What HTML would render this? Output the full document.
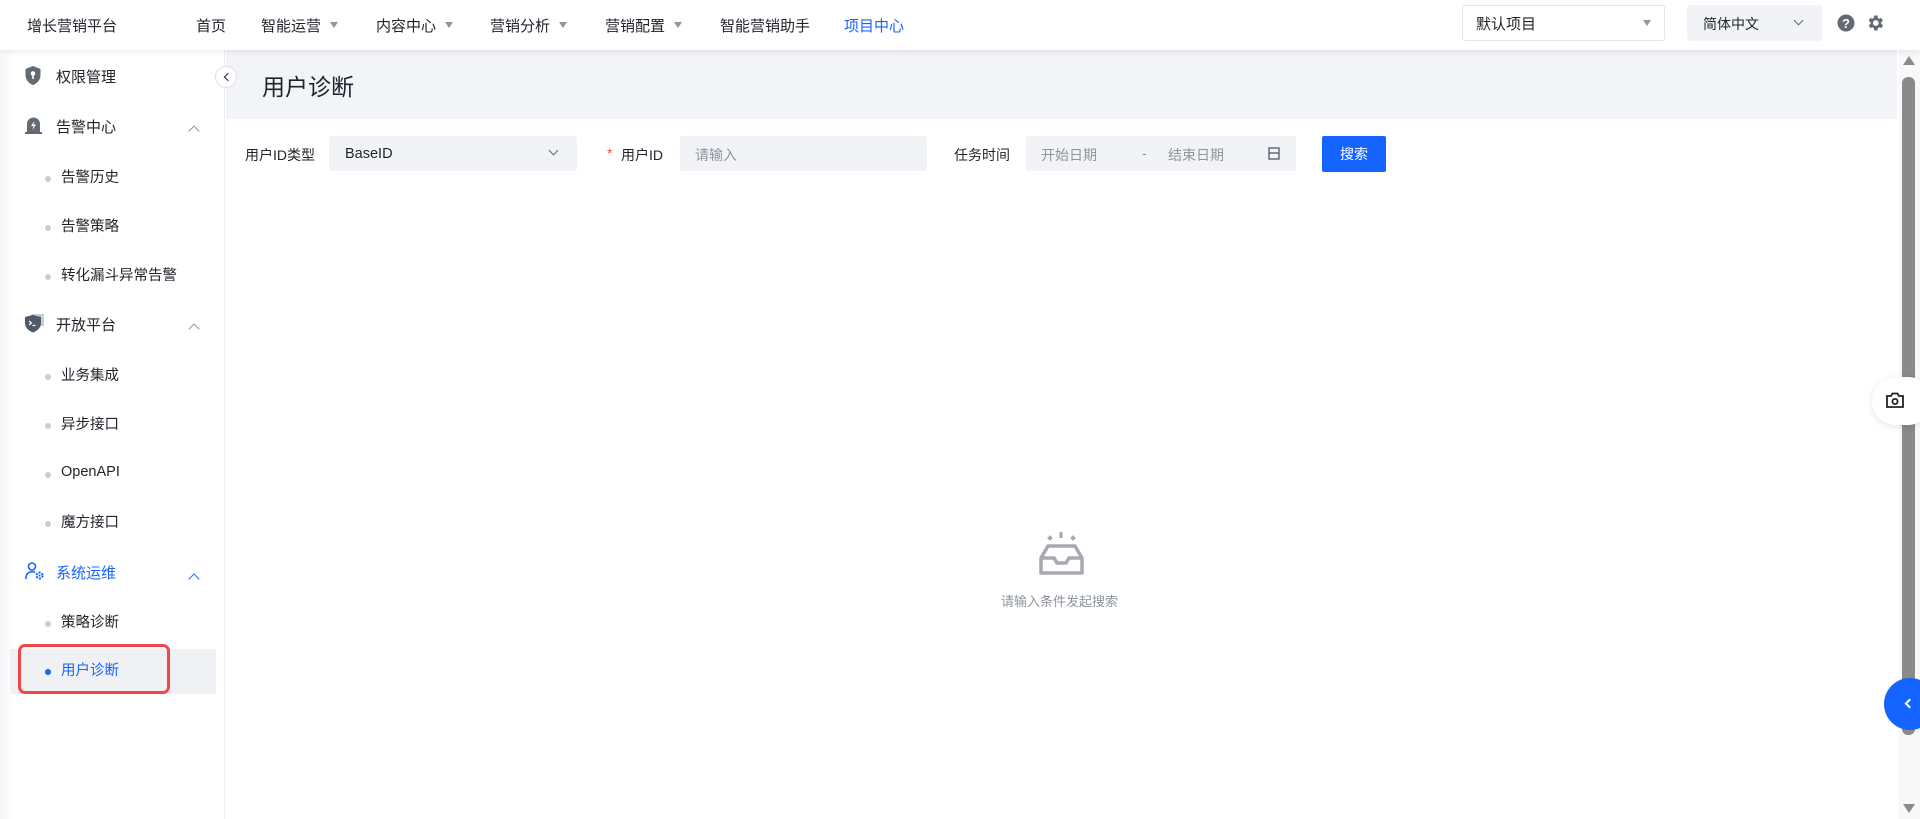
<!DOCTYPE html>
<html><head><meta charset="utf-8"><style>
*{margin:0;padding:0;box-sizing:border-box}
body{width:1920px;height:819px;overflow:hidden;background:#fff;font-family:"Liberation Sans","Noto Sans CJK SC",sans-serif;color:#1f2329;position:relative}
.abs{position:absolute;white-space:nowrap}
.hdr{position:absolute;left:0;top:0;width:1920px;height:50px;background:#fff;box-shadow:0 2px 6px rgba(0,0,0,.08);z-index:2}
.nav{font-size:15px;top:15px;color:#1f2329}
.tri{display:inline-block;margin-left:9px;width:0;height:0;border-left:4px solid transparent;border-right:4px solid transparent;border-top:6px solid #8f959e;vertical-align:3px}
.side{position:absolute;left:0;top:50px;width:225px;height:769px;background:linear-gradient(90deg,#f5f6f8 0,#fff 14px);border-right:1px solid #eceef1}
.mi{font-size:15px;color:#1f2329}
.ci{font-size:14.5px;color:#1f2329}
.dot{position:absolute;width:6px;height:6px;border-radius:50%;background:#c9cdd4}
.car{position:absolute;width:8px;height:8px;border-left:1.5px solid #8f959e;border-top:1.5px solid #8f959e;transform:rotate(45deg)}
.lbl{font-size:14px;color:#1f2329;top:145px}
.box{position:absolute;top:136px;height:35px;background:#f2f3f6;border-radius:2px}
.ph{font-size:14px;color:#8f959e}
</style></head><body>
<div class="hdr">
<div class="abs" style="left:27px;top:15px;font-size:15px">增长营销平台</div>
<div class="abs nav" style="left:196px">首页</div>
<div class="abs nav" style="left:261px">智能运营<span class="tri"></span></div>
<div class="abs nav" style="left:376px">内容中心<span class="tri"></span></div>
<div class="abs nav" style="left:490px">营销分析<span class="tri"></span></div>
<div class="abs nav" style="left:605px">营销配置<span class="tri"></span></div>
<div class="abs nav" style="left:720px">智能营销助手</div>
<div class="abs nav" style="left:844px;color:#1664ff">项目中心</div>
<div class="abs" style="left:1462px;top:5px;width:203px;height:36px;border:1px solid #e4e6ea;border-radius:3px"></div>
<div class="abs" style="left:1476px;top:13px;font-size:15px">默认项目</div>
<div class="abs" style="left:1643px;top:20px;border-left:4px solid transparent;border-right:4px solid transparent;border-top:6px solid #8f959e"></div>
<div class="abs" style="left:1687px;top:5px;width:135px;height:36px;background:#f2f3f6;border-radius:3px"></div>
<div class="abs" style="left:1703px;top:14px;font-size:14px">简体中文</div>
<div class="abs" style="left:1795px;top:17px;width:7px;height:7px;border-right:1.3px solid #646a73;border-bottom:1.3px solid #646a73;transform:rotate(45deg)"></div>
<svg class="abs" style="left:1837px;top:14px" width="18" height="18" viewBox="0 0 18 18"><circle cx="9" cy="9" r="8.5" fill="#646a73"/><text x="9" y="14" font-size="13" font-weight="bold" fill="#fff" text-anchor="middle" font-family="Liberation Sans">?</text></svg>
<svg class="abs" style="left:1865px;top:13px" width="20" height="20" viewBox="0 0 24 24"><path fill="#646a73" d="M19.4 13a7.5 7.5 0 0 0 0-2l2.1-1.6-2-3.5-2.5 1a7.6 7.6 0 0 0-1.7-1L15 3h-4l-.4 2.9a7.6 7.6 0 0 0-1.7 1l-2.5-1-2 3.5L6.6 11a7.5 7.5 0 0 0 0 2l-2.1 1.6 2 3.5 2.5-1a7.6 7.6 0 0 0 1.700 1L11 21h4l.4-2.9a7.6 7.6 0 0 0 1.7-1l2.5 1 2-3.5zM13 15.5a3.5 3.5 0 1 1 0-7 3.5 3.5 0 0 1 0 7z"/></svg>
</div>

<div class="side">
<svg class="abs" style="left:25px;top:16px" width="16" height="19" viewBox="0 0 16 19"><path d="M8 0L15.5 3v6c0 5-3.5 8.5-7.5 10C4 17.5.5 14 .5 9V3z" fill="#646a73"/><circle cx="8" cy="7.5" r="2.3" fill="#fff"/><rect x="7.2" y="8.5" width="1.6" height="4.5" fill="#fff"/></svg>
<div class="abs mi" style="left:56px;top:16px">权限管理</div>
<svg class="abs" style="left:25px;top:66px" width="17" height="18" viewBox="0 0 17 18"><path d="M2 17V8a6.5 6.5 0 0 1 13 0v9z" fill="#646a73"/><rect x="0" y="16" width="17" height="2" fill="#646a73"/><path d="M9.5 5L6 10h2.5L7.5 14 11 8.5H8.5z" fill="#fff"/></svg>
<div class="abs mi" style="left:56px;top:66px">告警中心</div>
<div class="car" style="left:190px;top:77px"></div>
<div class="dot" style="left:45px;top:126px"></div><div class="abs ci" style="left:61px;top:116px">告警历史</div>
<div class="dot" style="left:45px;top:175px"></div><div class="abs ci" style="left:61px;top:165px">告警策略</div>
<div class="dot" style="left:45px;top:224px"></div><div class="abs ci" style="left:61px;top:214px">转化漏斗异常告警</div>
<svg class="abs" style="left:25px;top:264px" width="19" height="19" viewBox="0 0 19 19"><rect x="6" y="0" width="13" height="12" fill="#c9cdd4"/><path d="M0 3L8 1l8 2v6c0 5-4 8-8 9.5C4 17 0 14 0 9z" fill="#4e5969"/><path d="M4 7l2.5 2L4 11M7.5 11.5h3" stroke="#fff" stroke-width="1.2" fill="none"/></svg>
<div class="abs mi" style="left:56px;top:264px">开放平台</div>
<div class="car" style="left:190px;top:275px"></div>
<div class="dot" style="left:45px;top:324px"></div><div class="abs ci" style="left:61px;top:314px">业务集成</div>
<div class="dot" style="left:45px;top:373px"></div><div class="abs ci" style="left:61px;top:363px">异步接口</div>
<div class="dot" style="left:45px;top:422px"></div><div class="abs ci" style="left:61px;top:414px">OpenAPI</div>
<div class="dot" style="left:45px;top:471px"></div><div class="abs ci" style="left:61px;top:461px">魔方接口</div>
<svg class="abs" style="left:25px;top:512px" width="19" height="18" viewBox="0 0 19 18"><circle cx="7" cy="4.5" r="3.5" fill="none" stroke="#1664ff" stroke-width="1.6"/><path d="M1 17v-1.5a6 6 0 0 1 9-5" fill="none" stroke="#1664ff" stroke-width="1.6"/><circle cx="14.5" cy="13.5" r="3" fill="none" stroke="#1664ff" stroke-width="2" stroke-dasharray="2 1.2"/><circle cx="14.5" cy="13.5" r="1" fill="#1664ff"/></svg>
<div class="abs mi" style="left:56px;top:512px;color:#1664ff">系统运维</div>
<div class="car" style="left:190px;top:525px;border-color:#1664ff"></div>
<div class="dot" style="left:45px;top:571px"></div><div class="abs ci" style="left:61px;top:561px">策略诊断</div>
<div class="abs" style="left:10px;top:599px;width:206px;height:45px;background:#f0f1f5;border-radius:2px"></div>
<div class="abs" style="left:18px;top:594px;width:152px;height:50px;border:3px solid #f04848;border-radius:7px"></div>
<div class="dot" style="left:45px;top:619px;background:#1664ff"></div><div class="abs ci" style="left:61px;top:609px;color:#1664ff">用户诊断</div>
</div>
<div class="abs" style="left:215px;top:66px;width:22px;height:22px;border-radius:50%;background:#fff;border:1px solid #dee0e3;z-index:3"></div>
<div class="abs" style="left:225px;top:74px;width:6px;height:6px;border-left:1.6px solid #1f2329;border-bottom:1.6px solid #1f2329;transform:rotate(45deg);z-index:3"></div>

<div class="abs" style="left:226px;top:50px;width:1671px;height:69px;background:#f3f4f8"></div>
<div class="abs" style="left:262px;top:68px;font-size:23px;color:#1f2329">用户诊断</div>

<div class="abs lbl" style="left:245px">用户ID类型</div>
<div class="box" style="left:329px;width:248px"></div>
<div class="abs" style="left:345px;top:146px;font-size:14.5px">BaseID</div>
<div class="abs" style="left:550px;top:147px;width:7px;height:7px;border-right:1.2px solid #646a73;border-bottom:1.2px solid #646a73;transform:rotate(45deg)"></div>
<div class="abs lbl" style="left:607px;color:#f54a45">*</div>
<div class="abs lbl" style="left:621px">用户ID</div>
<div class="box" style="left:680px;width:247px"></div>
<div class="abs ph" style="left:695px;top:145px">请输入</div>
<div class="abs lbl" style="left:954px">任务时间</div>
<div class="box" style="left:1026px;width:270px"></div>
<div class="abs ph" style="left:1041px;top:145px">开始日期</div>
<div class="abs ph" style="left:1142px;top:145px">-</div>
<div class="abs ph" style="left:1168px;top:145px">结束日期</div>
<svg class="abs" style="left:1268px;top:147px" width="12" height="13" viewBox="0 0 12 13"><rect x="1" y="1" width="10" height="11" fill="none" stroke="#4e5969" stroke-width="1.3"/><line x1="1" y1="6" x2="11" y2="6" stroke="#4e5969" stroke-width="1.3"/></svg>
<div class="abs" style="left:1322px;top:136px;width:64px;height:36px;background:#1664ff;border-radius:2px;color:#fff;font-size:14px;text-align:center;line-height:36px">搜索</div>

<svg class="abs" style="left:1038px;top:532px" width="48" height="44" viewBox="0 0 48 44"><rect x="21.5" y="0" width="3" height="6" fill="#a6a9b0"/><rect x="10" y="4" width="4" height="4" transform="rotate(45 12 6)" fill="#a6a9b0"/><rect x="33" y="4" width="4" height="4" transform="rotate(45 35 6)" fill="#a6a9b0"/><path d="M10 14h27l7 12v15H3V26z" fill="none" stroke="#a6a9b0" stroke-width="3.5" stroke-linejoin="round"/><path d="M3 26h13l3 5h9l3-5h13" fill="none" stroke="#a6a9b0" stroke-width="3.5"/></svg>
<div class="abs" style="left:1001px;top:591px;font-size:13px;color:#8f959e">请输入条件发起搜索</div>

<div class="abs" style="left:1899px;top:50px;width:21px;height:769px;background:#f8f8f8"></div>
<div class="abs" style="left:1903px;top:56px;border-left:6px solid transparent;border-right:6px solid transparent;border-bottom:9px solid #8a8a8a"></div>
<div class="abs" style="left:1902px;top:77px;width:13px;height:658px;background:#8a8a8a;border-radius:6px"></div>
<div class="abs" style="left:1903px;top:804px;border-left:6px solid transparent;border-right:6px solid transparent;border-top:9px solid #8a8a8a"></div>
<div class="abs" style="left:1872px;top:377px;width:60px;height:48px;background:#fff;border-radius:24px;box-shadow:0 2px 8px rgba(0,0,0,.1)"></div>
<svg class="abs" style="left:1886px;top:392px" width="18" height="16" viewBox="0 0 18 16"><path d="M1 4h4l1.5-2.5h5L13 4h4v11H1z" fill="none" stroke="#1f2329" stroke-width="1.8"/><circle cx="9" cy="9.5" r="2.6" fill="none" stroke="#1f2329" stroke-width="1.8"/></svg>
<div class="abs" style="left:1884px;top:678px;width:52px;height:52px;border-radius:50%;background:#1664ff"></div>
<div class="abs" style="left:1906px;top:700px;width:7px;height:7px;border-left:2px solid #fff;border-bottom:2px solid #fff;transform:rotate(45deg)"></div>
</body></html>
